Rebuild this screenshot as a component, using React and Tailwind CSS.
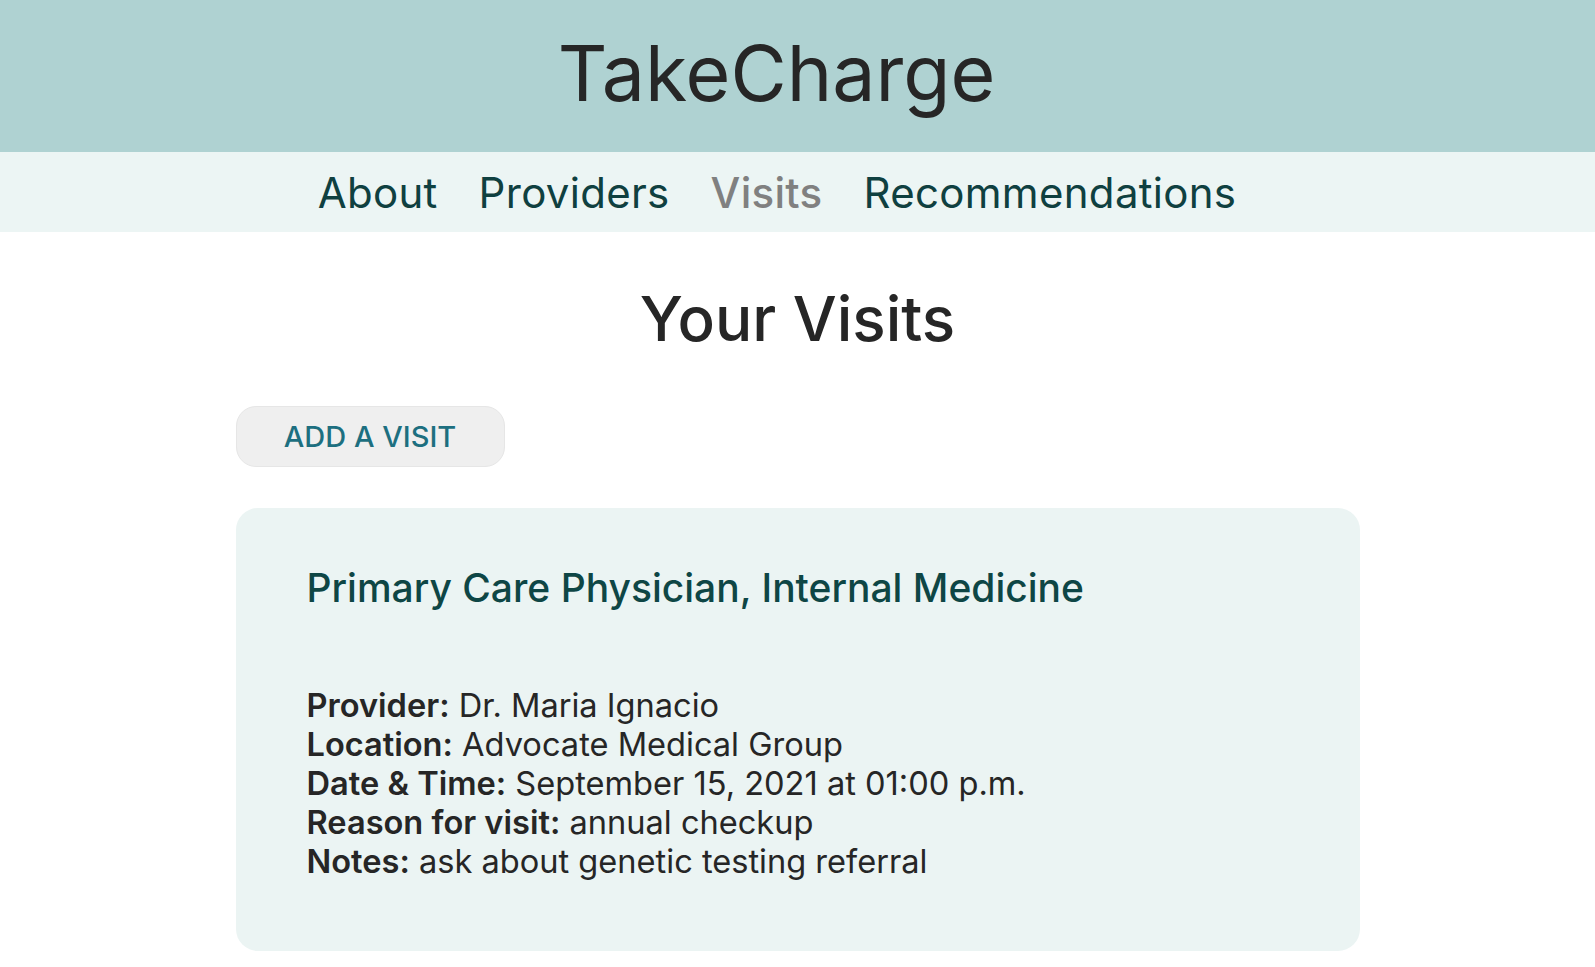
export default function App() {
  const font = { fontFamily: '"Inter", "Open Sans", sans-serif' };
  return (
    <div className="min-h-screen bg-white text-[#262626]" style={font}>
      <header className="h-[152px] bg-[#afd2d2] flex items-center justify-center">
        <h1 className="text-[77px] leading-none text-[#262626] pb-[6px] pr-[42px]">TakeCharge</h1>
      </header>
      <nav className="h-[80px] bg-[#ecf5f4] flex items-center justify-center">
        <ul className="flex items-center text-[42px] text-[#0f4040] tracking-[0.3px]">
          <li className="mr-[41px]">About</li>
          <li className="mr-[41px]">Providers</li>
          <li className="mr-[41px] text-[#808080] font-medium">Visits</li>
          <li className="mr-[41px]">Recommendations</li>
        </ul>
      </nav>
      <main className="w-[1124px] mx-auto">
        <h2 className="text-[62px] leading-none text-center mt-[56px] mb-[56px] font-medium">Your Visits</h2>
        <button className="w-[269px] h-[61px] rounded-[20px] bg-[#efefef] border border-[#e6e6e6] text-[29px] font-medium text-[#1d6f80] uppercase">
          Add a visit
        </button>
        <section className="mt-[41px] rounded-[22px] bg-[#ebf4f3] px-[71px] pt-[60px] pb-[70px]">
          <h3 className="text-[39px] leading-none text-[#0e4645] font-medium">Primary Care Physician, Internal Medicine</h3>
          <div className="mt-[79px] text-[32.6px] leading-[39px] text-[#262626]">
            <p><span className="font-semibold">Provider:</span> Dr. Maria Ignacio</p>
            <p><span className="font-semibold">Location:</span> Advocate Medical Group</p>
            <p><span className="font-semibold">Date &amp; Time:</span> September 15, 2021 at 01:00 p.m.</p>
            <p><span className="font-semibold">Reason for visit:</span> annual checkup</p>
            <p><span className="font-semibold">Notes:</span> ask about genetic testing referral</p>
          </div>
        </section>
      </main>
    </div>
  );
}
